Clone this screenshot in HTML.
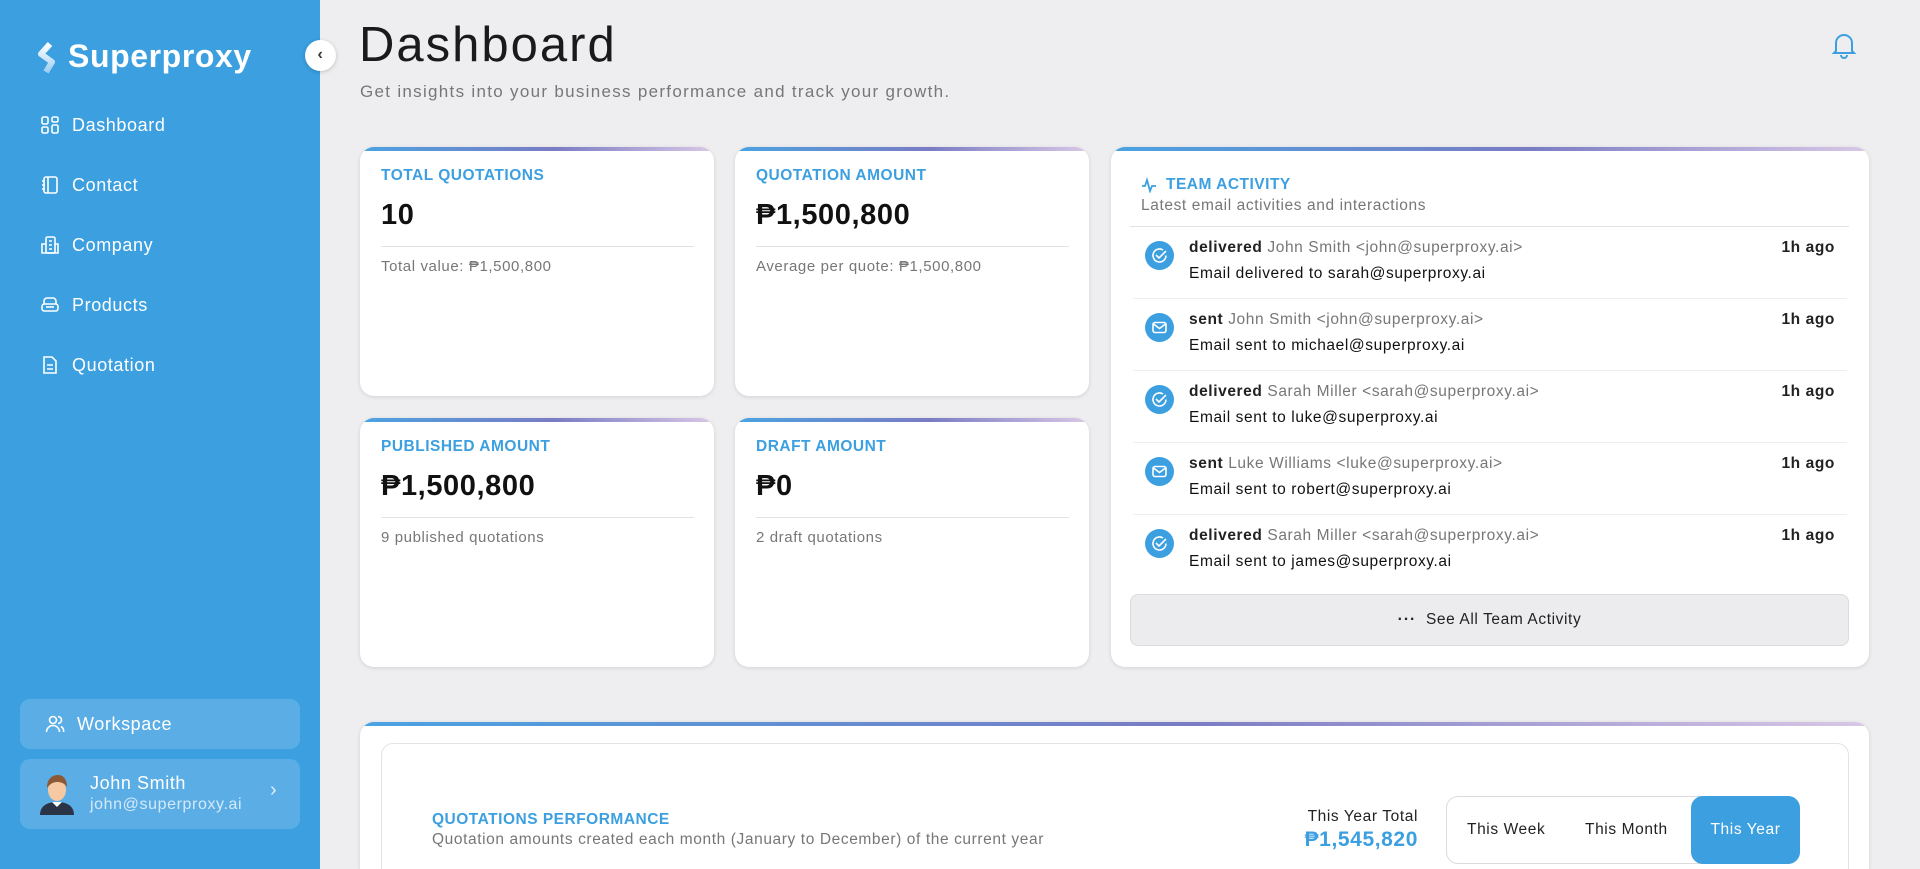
<!DOCTYPE html>
<html><head><meta charset="utf-8"><style>
*{box-sizing:border-box;margin:0;padding:0}
html{overflow:hidden;width:1920px;height:869px}
body{width:1920px;height:869px;overflow:hidden;background:#eeeef0;font-family:"Liberation Sans",sans-serif;position:relative;color:#111;letter-spacing:.6px}
.a{position:absolute}
.side{left:0;top:0;width:320px;height:869px;background:#3b9fe0}
.nav{left:40px;color:#fff;font-size:18px;display:flex;align-items:center;gap:12px;height:30px}
.nav svg{width:20px;height:20px}
.card{background:#fff;border-radius:14px;box-shadow:0 1px 4px rgba(0,0,0,.12);overflow:hidden}
.card:before{content:"";position:absolute;left:0;top:0;right:0;height:4px;background:linear-gradient(90deg,#4aa3e2,#7a7cc4 55%,#d9c8e6)}
.lbl{color:#3b9fe0;font-size:15.5px;font-weight:bold;letter-spacing:.5px}
.val{font-size:29px;font-weight:bold;color:#111}
.sub{font-size:15px;color:#777}
.hr{height:1px;background:#e3e3e6}
.row{left:22px;right:22px;height:72px;border-bottom:1px solid #eee}
.ic{left:12px;top:14px;width:29px;height:29px;border-radius:50%;background:#3b9fe0;display:flex;align-items:center;justify-content:center}
.l1{left:56px;top:12px;font-size:15.5px;color:#777}
.l1 b{color:#222}
.l2{left:56px;top:38px;font-size:15.5px;color:#111}
.ago{right:12px;top:12px;font-size:15.5px;font-weight:bold;color:#222}
</style></head><body>
<div class="a side"></div>
<svg class="a" style="left:36px;top:42px" width="24" height="32" viewBox="0 0 24 32"><defs><linearGradient id="g" x1="0" y1="0" x2="0" y2="1"><stop offset="0" stop-color="#fff"/><stop offset="1" stop-color="#fff" stop-opacity=".5"/></linearGradient></defs><path d="M14 2 L5 12 L16 20 L10 30" fill="none" stroke="url(#g)" stroke-width="6" stroke-linejoin="round"/></svg>
<div class="a" style="left:68px;top:38px;color:#fff;font-size:32px;font-weight:bold">Superproxy</div>
<div class="a" style="left:305px;top:40px;width:31px;height:31px;border-radius:50%;background:#fff;box-shadow:0 1px 4px rgba(0,0,0,.2);text-align:center;line-height:30px;font-size:16px;font-weight:bold;color:#333">‹</div>
<div class="a nav" style="top:110px"><svg viewBox="0 0 20 20" fill="none" stroke="#fff" stroke-width="1.6"><rect x="2" y="2" width="6" height="7" rx="1.5"/><rect x="12" y="2" width="6" height="5" rx="1.5"/><rect x="2" y="12" width="6" height="6" rx="1.5"/><rect x="12" y="10" width="6" height="8" rx="1.5"/></svg>Dashboard</div>
<div class="a nav" style="top:170px"><svg viewBox="0 0 20 20" fill="none" stroke="#fff" stroke-width="1.6"><rect x="4" y="2" width="13" height="16" rx="2"/><path d="M8 2v16M2 6h3M2 10h3M2 14h3"/></svg>Contact</div>
<div class="a nav" style="top:230px"><svg viewBox="0 0 20 20" fill="none" stroke="#fff" stroke-width="1.6"><rect x="6" y="2" width="9" height="16" rx="1.5"/><path d="M6 9H2v9h16V9h-3M9 6h3M9 10h3M9 14h3"/></svg>Company</div>
<div class="a nav" style="top:290px"><svg viewBox="0 0 20 20" fill="none" stroke="#fff" stroke-width="1.6"><path d="M4 9V6a3 3 0 0 1 3-3h6a3 3 0 0 1 3 3v3"/><rect x="2" y="9" width="16" height="7" rx="2.5"/><path d="M6 12h8"/></svg>Products</div>
<div class="a nav" style="top:350px"><svg viewBox="0 0 20 20" fill="none" stroke="#fff" stroke-width="1.6"><path d="M4 2h8l4 4v12H4z"/><path d="M7 10h6M7 14h6"/></svg>Quotation</div>
<div class="a" style="left:20px;top:699px;width:280px;height:50px;border-radius:10px;background:rgba(255,255,255,.16);color:#fff;font-size:18px;display:flex;align-items:center;padding-left:25px;gap:12px"><svg width="20" height="20" viewBox="0 0 20 20" fill="none" stroke="#fff" stroke-width="1.6"><circle cx="8" cy="6" r="3.5"/><path d="M1.5 18a6.5 6.5 0 0 1 13 0M13 2.5a3.5 3.5 0 0 1 0 7M16 12.5a5 5 0 0 1 2.5 5.5"/></svg>Workspace</div>
<div class="a" style="left:20px;top:759px;width:280px;height:70px;border-radius:10px;background:rgba(255,255,255,.16)">
<svg class="a" style="left:18px;top:14px" width="38" height="42" viewBox="0 0 38 42"><path d="M2 42c0-9 7-13 17-13s17 4 17 13z" fill="#2b3347"/><path d="M14 29l5 5 5-5z" fill="#fff"/><ellipse cx="19" cy="17" rx="9" ry="11" fill="#f6c9a3"/><path d="M9 15c0-9 5-13 11-13s9 5 9 12c-3-4-6-5-10-5s-7 2-10 6z" fill="#8b5a34"/></svg>
<div class="a" style="left:70px;top:14px;color:#fff;font-size:18px">John Smith</div>
<div class="a" style="left:70px;top:37px;color:#d6e9f8;font-size:16px">john@superproxy.ai</div>
<div class="a" style="left:250px;top:20px;color:#e0eefa;font-size:20px">›</div></div>

<div class="a" style="left:359px;top:17px;font-size:49px;color:#1a1a1a;letter-spacing:2px;-webkit-text-stroke:0;font-weight:normal">Dashboard</div>
<div class="a" style="left:360px;top:82px;font-size:17px;color:#777;letter-spacing:1.3px">Get insights into your business performance and track your growth.</div>
<svg class="a" style="left:1832px;top:31px" width="24" height="28" viewBox="0 0 24 28" fill="none" stroke="#3b9fe0" stroke-width="2"><path d="M4 20V12a8 8 0 0 1 16 0v8l2 2H2z"/><path d="M9 24a3 3 0 0 0 6 0"/></svg>

<div class="a card" style="left:360px;top:147px;width:354px;height:249px">
<div class="a lbl" style="left:21px;top:20px">TOTAL QUOTATIONS</div><div class="a val" style="left:21px;top:52px">10</div><div class="a hr" style="left:21px;right:20px;top:99px"></div><div class="a sub" style="left:21px;top:111px">Total value: ₱1,500,800</div></div>
<div class="a card" style="left:735px;top:147px;width:354px;height:249px">
<div class="a lbl" style="left:21px;top:20px">QUOTATION AMOUNT</div><div class="a val" style="left:21px;top:52px">₱1,500,800</div><div class="a hr" style="left:21px;right:20px;top:99px"></div><div class="a sub" style="left:21px;top:111px">Average per quote: ₱1,500,800</div></div>
<div class="a card" style="left:360px;top:418px;width:354px;height:249px">
<div class="a lbl" style="left:21px;top:20px">PUBLISHED AMOUNT</div><div class="a val" style="left:21px;top:52px">₱1,500,800</div><div class="a hr" style="left:21px;right:20px;top:99px"></div><div class="a sub" style="left:21px;top:111px">9 published quotations</div></div>
<div class="a card" style="left:735px;top:418px;width:354px;height:249px">
<div class="a lbl" style="left:21px;top:20px">DRAFT AMOUNT</div><div class="a val" style="left:21px;top:52px">₱0</div><div class="a hr" style="left:21px;right:20px;top:99px"></div><div class="a sub" style="left:21px;top:111px">2 draft quotations</div></div>

<div class="a card" style="left:1111px;top:147px;width:758px;height:520px">
<svg class="a" style="left:30px;top:30px" width="16" height="16" viewBox="0 0 16 16" fill="none" stroke="#3b9fe0" stroke-width="1.8"><path d="M1 9h3l2-6 3 11 2-5h4"/></svg>
<div class="a lbl" style="left:55px;top:29px">TEAM ACTIVITY</div>
<div class="a sub" style="left:30px;top:50px;font-size:15.5px">Latest email activities and interactions</div>
<div class="a hr" style="left:19px;right:20px;top:79px"></div>
<div class="a" style="left:0;right:0;top:80px;height:432px">
<div class="a row" style="top:0"><div class="a ic"><svg width="17" height="17" viewBox="0 0 17 17" fill="none" stroke="#fff" stroke-width="1.6"><path d="M15 8.5a6.5 6.5 0 1 1-3-5.5"/><path d="M5 8l3 3 7-7"/></svg></div><div class="a l1"><b>delivered</b> John Smith &lt;john@superproxy.ai&gt;</div><div class="a l2">Email delivered to sarah@superproxy.ai</div><div class="a ago">1h ago</div></div>
<div class="a row" style="top:72px"><div class="a ic"><svg width="17" height="17" viewBox="0 0 17 17" fill="none" stroke="#fff" stroke-width="1.6"><rect x="2" y="3.5" width="13" height="10" rx="2"/><path d="M2.5 5l6 4.5 6-4.5"/></svg></div><div class="a l1"><b>sent</b> John Smith &lt;john@superproxy.ai&gt;</div><div class="a l2">Email sent to michael@superproxy.ai</div><div class="a ago">1h ago</div></div>
<div class="a row" style="top:144px"><div class="a ic"><svg width="17" height="17" viewBox="0 0 17 17" fill="none" stroke="#fff" stroke-width="1.6"><path d="M15 8.5a6.5 6.5 0 1 1-3-5.5"/><path d="M5 8l3 3 7-7"/></svg></div><div class="a l1"><b>delivered</b> Sarah Miller &lt;sarah@superproxy.ai&gt;</div><div class="a l2">Email sent to luke@superproxy.ai</div><div class="a ago">1h ago</div></div>
<div class="a row" style="top:216px"><div class="a ic"><svg width="17" height="17" viewBox="0 0 17 17" fill="none" stroke="#fff" stroke-width="1.6"><rect x="2" y="3.5" width="13" height="10" rx="2"/><path d="M2.5 5l6 4.5 6-4.5"/></svg></div><div class="a l1"><b>sent</b> Luke Williams &lt;luke@superproxy.ai&gt;</div><div class="a l2">Email sent to robert@superproxy.ai</div><div class="a ago">1h ago</div></div>
<div class="a row" style="top:288px;border:0"><div class="a ic"><svg width="17" height="17" viewBox="0 0 17 17" fill="none" stroke="#fff" stroke-width="1.6"><path d="M15 8.5a6.5 6.5 0 1 1-3-5.5"/><path d="M5 8l3 3 7-7"/></svg></div><div class="a l1"><b>delivered</b> Sarah Miller &lt;sarah@superproxy.ai&gt;</div><div class="a l2">Email sent to james@superproxy.ai</div><div class="a ago">1h ago</div></div>
</div>
<div class="a" style="left:19px;right:20px;top:447px;height:52px;background:#ececee;border:1px solid #dcdcdf;border-radius:8px;text-align:center;line-height:50px;font-size:15.5px;color:#222"><b style="letter-spacing:1px">···</b>&nbsp;&nbsp;See All Team Activity</div>
</div>

<div class="a card" style="left:360px;top:722px;width:1509px;height:147px;border-bottom-left-radius:0;border-bottom-right-radius:0">
<div class="a" style="left:21px;top:21px;right:20px;height:160px;border:1px solid #e3e3e6;border-radius:12px">
<div class="a lbl" style="left:50px;top:67px">QUOTATIONS PERFORMANCE</div>
<div class="a sub" style="left:50px;top:87px;font-size:15.5px">Quotation amounts created each month (January to December) of the current year</div>
<div class="a" style="right:430px;top:64px;font-size:15.5px;color:#222">This Year Total</div>
<div class="a" style="right:430px;top:84px;font-size:21px;font-weight:bold;color:#3b9fe0">₱1,545,820</div>
<div class="a" style="left:1064px;top:52px;width:354px;height:68px;border:1px solid #dcdcdf;border-radius:12px;font-size:15.5px;color:#222">
<div class="a" style="left:20px;top:24px">This Week</div><div class="a" style="left:138px;top:24px">This Month</div>
<div class="a" style="right:-1px;top:-1px;width:109px;height:68px;background:#3b9fe0;border-radius:12px;color:#fff;text-align:center;line-height:68px">This Year</div></div>
</div></div>
</body></html>
